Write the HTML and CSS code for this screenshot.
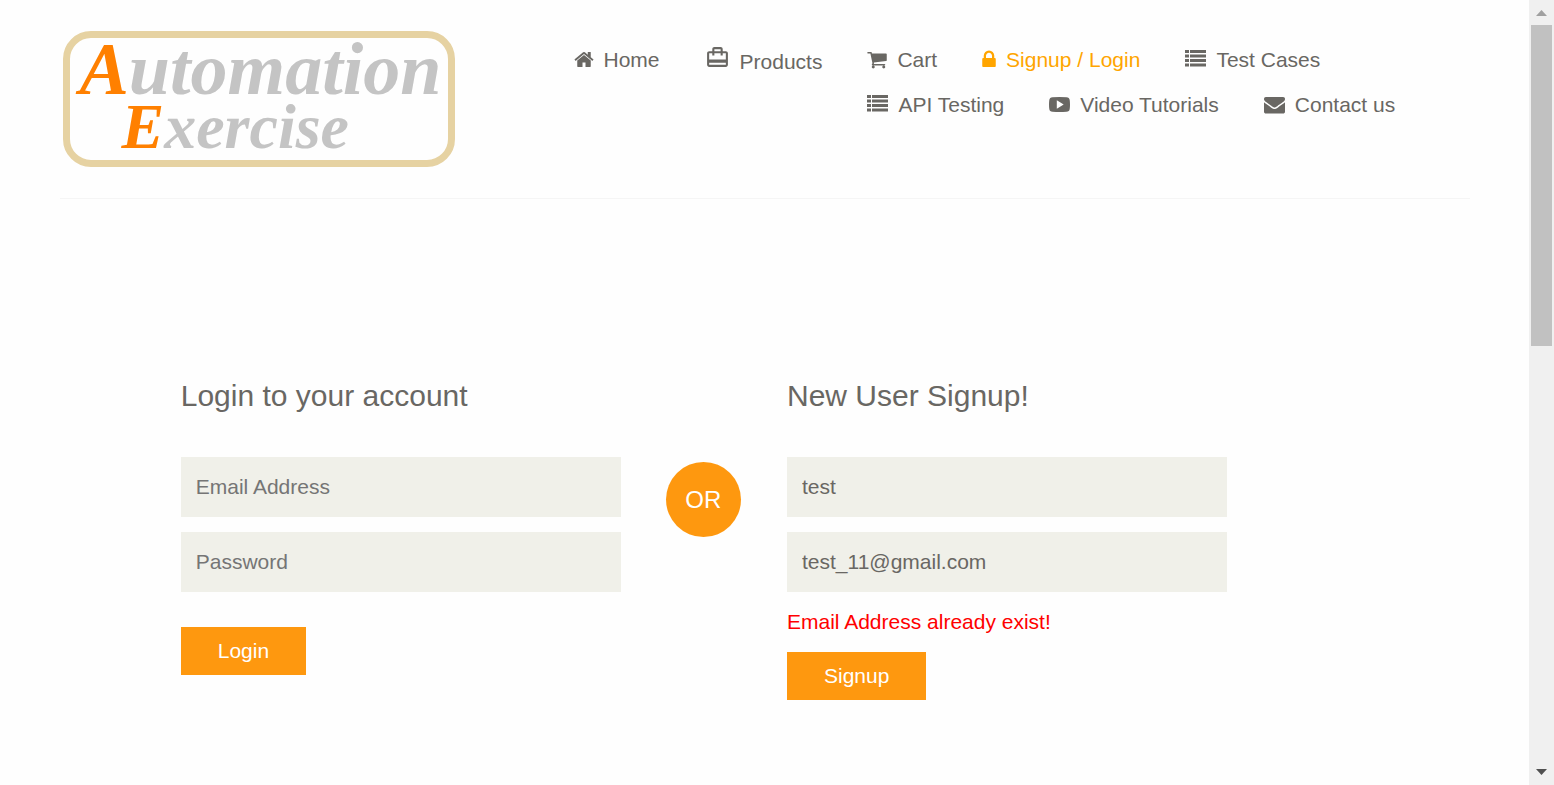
FILE: index.html
```html
<!DOCTYPE html>
<html lang="en">
<head>
<meta charset="utf-8">
<meta name="viewport" content="width=device-width, initial-scale=1">
<title>Automation Exercise - Signup / Login</title>
<link rel="stylesheet" href="styles.css">
</head>
<body>
<svg class="sprite" aria-hidden="true">
  <symbol id="list" viewBox="0 0 21 21">
    <path d="M0 1h4v3H0zM5 1h16v3H5zM0 5.500h4v3H0zM5 5.500h16v3H5zM0 10h4v3H0zM5 10h16v3H5zM0 14.500h4v3H0zM5 14.500h16v3H5z"/>
  </symbol>
</svg>
<div class="page">
  <header class="header grid">
    <a class="logo" href="#" aria-label="Automation Exercise">
      <span class="logo-line"><span class="logo-cap">A</span>utomation</span>
      <span class="logo-line logo-second"><span class="logo-cap">E</span>xercise</span>
    </a>
    <nav class="nav">
      <ul class="menu">
        <li class="item"><a href="#"><svg class="icon icon-mid" viewBox="64 0 1664 1792"><path d="M1472 992v480q0 26-19 45t-45 19h-384v-384h-256v384h-384q-26 0-45-19t-19-45v-480q0-1 .5-3t.5-3l575-474 575 474q1 2 1 6zm223-69l-62 74q-8 9-21 11h-3q-13 0-21-7l-692-577-692 577q-12 8-24 7-13-2-21-11l-62-74q-8-10-7-23.5t11-21.5l719-599q32-26 76-26t76 26l244 204v-195q0-14 9-23t23-9h192q14 0 23 9t9 23v408l219 182q10 8 11 21.5t-7 23.5z"/></svg>Home</a></li>
        <li class="item"><a href="#"><svg class="icon icon-travel" viewBox="0 0 24 24"><path d="M20 6h-3V4c0-1.11-.89-2-2-2H9c-1.11 0-2 .89-2 2v2H4c-1.11 0-2 .89-2 2v11c0 1.11.89 2 2 2h16c1.11 0 2-.89 2-2V8c0-1.11-.89-2-2-2zM9 4h6v2H9V4zm11 15H4v-2h16v2zm0-5H4V8h3v2h2V8h6v2h2V8h3v6z"/></svg>Products</a></li>
        <li class="item"><a href="#"><svg class="icon icon-mid" viewBox="64 0 1664 1792"><path d="M704 1536q0 52-38 90t-90 38-90-38-38-90 38-90 90-38 90 38 38 90zm896 0q0 52-38 90t-90 38-90-38-38-90 38-90 90-38 90 38 38 90zm128-1088v512q0 24-16.5 42.5t-40.5 21.5l-1044 122q13 60 13 70 0 16-24 64h920q26 0 45 19t19 45-19 45-45 19h-1024q-26 0-45-19t-19-45q0-11 8-31.5t16-36 21.5-40 15.5-29.5l-177-823h-204q-26 0-45-19t-19-45 19-45 45-19h256q16 0 28.5 6.5t19.5 15.5 13 24.5 8 26 5.5 29.5 4.5 26h1201q26 0 45 19t19 45z"/></svg>Cart</a></li>
        <li class="item"><a class="active" href="#"><svg class="icon icon-narrow" viewBox="320 0 1152 1792"><path d="M640 768h512v-192q0-106-75-181t-181-75-181 75-75 181v192zm832 96v576q0 40-28 68t-68 28h-960q-40 0-68-28t-28-68v-576q0-40 28-68t68-28h32v-192q0-184 132-316t316-132 316 132 132 316v192h32q40 0 68 28t28 68z"/></svg>Signup / Login</a></li>
        <li class="item"><a href="#"><svg class="icon"><use href="#list"/></svg>Test Cases</a></li>
        <li class="item"><a href="#"><svg class="icon"><use href="#list"/></svg>API Testing</a></li>
        <li class="item"><a href="#"><svg class="icon" viewBox="0 0 21 21"><path fill-rule="evenodd" d="M3.500 3.200Q10.500 2.600 17.500 3.200Q20.400 3.400 20.700 6Q21.300 10.500 20.700 15Q20.400 17.600 17.500 17.800Q10.500 18.400 3.500 17.800Q.6 17.600.3 15Q-.3 10.500.3 6Q.6 3.400 3.500 3.200ZM7.800 6.300V14.700L14.700 10.500Z"/></svg>Video Tutorials</a></li>
        <li class="item"><a href="#"><svg class="icon" viewBox="0 0 1792 1792"><path d="M1792 710v794q0 66-47 113t-113 47h-1472q-66 0-113-47t-47-113v-794q44 49 101 87 362 246 497 345 57 42 92.500 65.500t94.500 48 110 24.500h2q51 0 110-24.500t94.500-48 92.500-65.500q170-123 498-345 57-39 100-87zm0-294q0 79-49 151t-122 123q-376 261-468 325-10 7-42.500 31t-54 38.500-52 32.500-57.500 27-50 9h-2q-23 0-50-9t-57.500-27-52-32.500-54-38.500-42.500-31q-91-64-262-182.500t-205-142.500q-62-42-117-115.500t-55-136.500q0-78 41.500-130t118.500-52h1472q65 0 112.500 47t47.500 113z"/></svg>Contact us</a></li>
      </ul>
    </nav>
  </header>
  <main class="forms grid">
    <form class="form login">
      <h2 class="title">Login to your account</h2>
      <input class="field" type="email" placeholder="Email Address" aria-label="Email Address">
      <input class="field" type="password" placeholder="Password" aria-label="Password">
      <button class="button button-login" type="button">Login</button>
    </form>
    <p class="or">OR</p>
    <form class="form signup">
      <h2 class="title">New User Signup!</h2>
      <input class="field" type="text" value="test" placeholder="Name" aria-label="Name">
      <input class="field" type="email" value="test_11@gmail.com" placeholder="Email Address" aria-label="Signup email address">
      <p class="error">Email Address already exist!</p>
      <button class="button" type="button">Signup</button>
    </form>
  </main>
</div>
<div class="scrollbar" aria-hidden="true">
  <svg class="arrow arrow-up" viewBox="0 0 25 25"><path d="M7 16L12.500 10L18 16Z"/></svg>
  <div class="track"><div class="thumb"></div></div>
  <svg class="arrow arrow-down" viewBox="0 0 25 25"><path d="M7 9L12.500 15L18 9Z"/></svg>
</div>
</body>
</html>
```
FILE: styles.css
```css
* {
  box-sizing: border-box;
}

body {
  display: flex;
  margin: 0;
  height: 100vh;
  overflow: hidden;
  background: #fefefe;
  color: #696763;
  font: 21px/30px "Liberation Sans", Arial, sans-serif;
}

.sprite {
  position: absolute;
  width: 0;
  height: 0;
}

.page {
  flex: 1;
  min-width: 0;
}

.grid {
  display: grid;
  grid-template-columns: repeat(12, minmax(0, 1fr));
  column-gap: 45px;
  align-items: start;
  max-width: 1410px;
  margin: 0 auto;
}

.header {
  padding: 31px 0;
  border-bottom: 1px solid #f5f5f5;
}

.logo {
  grid-column: span 4;
  justify-self: start;
  margin-left: 3px;
  padding: 2px 8px 0 10px;
  width: 392px;
  height: 136px;
  border: 7px solid #e6d2a2;
  border-radius: 28px;
  color: #c4c4c4;
  font: italic bold 74px/58px "Liberation Serif", serif;
  text-decoration: none;
  white-space: nowrap;
}

.logo-line {
  display: block;
}

.logo-second {
  padding-left: 42px;
  font-size: 64px;
}

.logo-cap {
  color: #ff8000;
}

.nav {
  grid-column: span 8;
  padding: 14px 0 0 29px;
}

.menu {
  margin: 0;
  padding: 0;
  list-style: none;
}

.item {
  float: left;
  margin-right: 45px;
  padding-bottom: 15px;
}

.item a {
  color: inherit;
  text-decoration: none;
}

.item .active {
  color: orange;
}

.icon {
  width: 21px;
  height: 21px;
  margin-right: 10px;
  vertical-align: -3px;
  fill: currentColor;
}

.icon-mid {
  width: 20px;
}

.icon-narrow {
  width: 14px;
}

.icon-travel {
  width: 25px;
  height: 25px;
  vertical-align: -1px;
}

.forms {
  padding-top: 182px;
}

.form {
  display: flex;
  flex-direction: column;
  align-items: flex-start;
  gap: 15px;
  grid-column: span 4;
}

.login {
  grid-column: 2 / span 4;
}

.title {
  margin: 0 0 31px;
  font-size: 30px;
  font-weight: 400;
  line-height: 30px;
}

.field {
  width: 100%;
  height: 60px;
  padding: 0 15px;
  border: 0;
  border-radius: 0;
  background: #f0f0e9;
  color: #696763;
  font: inherit;
}

.field::placeholder {
  color: #757575;
}

.or {
  width: 75px;
  height: 75px;
  margin: 81px 0 0;
  border-radius: 50%;
  background: #fe980f;
  color: #fff;
  font-size: 24px;
  line-height: 75px;
  text-align: center;
}

.error {
  margin: 0;
  color: red;
}

.button {
  height: 48px;
  padding: 0 37px;
  border: 0;
  background: #fe980f;
  color: #fff;
  font: inherit;
}

.button-login {
  margin-top: 20px;
}

.scrollbar {
  display: flex;
  flex-direction: column;
  width: 25px;
  background: #f0f0f0;
}

.arrow {
  width: 25px;
  height: 25px;
}

.arrow-up {
  fill: #a0a0a0;
}

.arrow-down {
  fill: #505050;
}

.track {
  flex: 1;
  padding: 0 2px;
}

.thumb {
  height: 321px;
  background: #c1c1c1;
}
```
